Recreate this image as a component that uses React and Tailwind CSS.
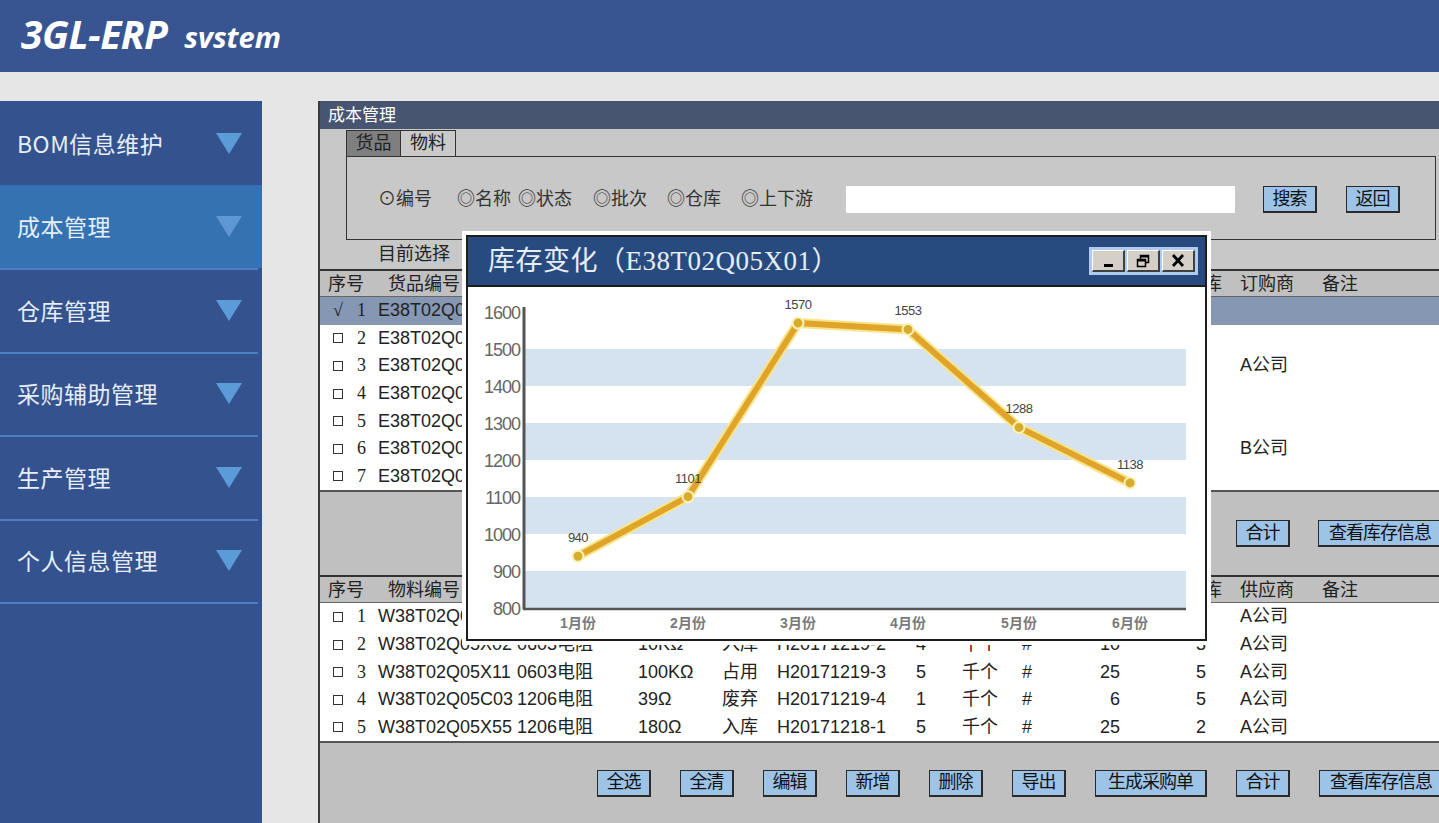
import React from 'react'

//#region data
const menu = [
    { label: 'BOM信息维护', active: false, line: false },
    { label: '成本管理', active: true, line: false },
    { label: '仓库管理', active: false, line: true },
    { label: '采购辅助管理', active: false, line: true },
    { label: '生产管理', active: false, line: true },
    { label: '个人信息管理', active: false, line: true },
]

// columns between 名称 and 位置 sit under the popup in the screenshot, so they stay empty
const goods = [
    { n: 1, code: 'E38T02Q05X01', buyer: '' },
    { n: 2, code: 'E38T02Q05X02', buyer: '' },
    { n: 3, code: 'E38T02Q05X03', buyer: 'A公司' },
    { n: 4, code: 'E38T02Q05X04', buyer: '' },
    { n: 5, code: 'E38T02Q05X05', buyer: '' },
    { n: 6, code: 'E38T02Q05X06', buyer: 'B公司' },
    { n: 7, code: 'E38T02Q05X07', buyer: '' },
]

const materials = [
    { n: 1, code: 'W38T02Q05X01', name: '', spec: '', status: '', batch: '', qty: '', unit: '', loc: '', q2: '', x: '', sup: 'A公司' },
    { n: 2, code: 'W38T02Q05X02', name: '0603电阻', spec: '10KΩ', status: '入库', batch: 'H20171219-2', qty: '4', unit: '千个', loc: '#', q2: '10', x: '3', sup: 'A公司' },
    { n: 3, code: 'W38T02Q05X11', name: '0603电阻', spec: '100KΩ', status: '占用', batch: 'H20171219-3', qty: '5', unit: '千个', loc: '#', q2: '25', x: '5', sup: 'A公司' },
    { n: 4, code: 'W38T02Q05C03', name: '1206电阻', spec: '39Ω', status: '废弃', batch: 'H20171219-4', qty: '1', unit: '千个', loc: '#', q2: '6', x: '5', sup: 'A公司' },
    { n: 5, code: 'W38T02Q05X55', name: '1206电阻', spec: '180Ω', status: '入库', batch: 'H20171218-1', qty: '5', unit: '千个', loc: '#', q2: '25', x: '2', sup: 'A公司' },
]

const chart = [
    { m: '1月份', v: 940 },
    { m: '2月份', v: 1101 },
    { m: '3月份', v: 1570 },
    { m: '4月份', v: 1553 },
    { m: '5月份', v: 1288 },
    { m: '6月份', v: 1138 },
]
//#endregion

const Btn = ({ children, w = 'w-[54px]' }) => (
    <div className={`${w} h-[27px] shrink-0 flex items-center justify-center bg-[#9dc3e6] border border-[#2a2a2a] border-r-2 border-b-2 text-[18px] tracking-[-1px] text-[#111] whitespace-nowrap overflow-hidden`}>
        {children}
    </div>
)

const Box = () => (
    <span className="inline-block w-[10px] h-[10px] border border-[#333] bg-white"></span>
)

const SelCell = ({ n, checked }) => (
    <div className="w-[58px] shrink-0 flex items-center">
        <div className="w-[37px] pl-[13px] flex items-center">
            {checked ? <span className="font-['Liberation_Serif',serif] text-[18px] text-[#222]">√</span> : <Box />}
        </div>
        <span className="font-['Liberation_Serif',serif] text-[18px] text-[#222]">{n}</span>
    </div>
)

const TableHeader = ({ codeLabel, partyLabel }) => (
    <div className="h-[28px] shrink-0 border-t-2 border-b border-t-[#333] border-b-[#666] bg-[#c0c0c0] flex items-center text-[18px] text-[#222] pt-[1px]">
        <div className="w-[68px] shrink-0 pl-[8px]">序号</div>
        <div className="w-[798px] shrink-0">{codeLabel}</div>
        <div className="w-[54px] shrink-0">在库</div>
        <div className="w-[82px] shrink-0">{partyLabel}</div>
        <div>备注</div>
    </div>
)

const DataRow = ({ r, checked, party }) => (
    <div className={`h-[27.6px] shrink-0 flex items-center text-[18px] text-[#222] whitespace-nowrap ${checked ? 'bg-[#8597b3]' : 'bg-white'}`}>
        <SelCell n={r.n} checked={checked} />
        <div className="w-[139px] shrink-0">{r.code}</div>
        <div className="w-[121px] shrink-0">{r.name}</div>
        <div className="w-[84px] shrink-0">{r.spec}</div>
        <div className="w-[55px] shrink-0">{r.status}</div>
        <div className="w-[139px] shrink-0">{r.batch}</div>
        <div className="w-[46px] shrink-0">{r.qty}</div>
        <div className="w-[60px] shrink-0">{r.unit}</div>
        <div className="w-[58px] shrink-0">{r.loc}</div>
        <div className="w-[40px] shrink-0 text-right">{r.q2}</div>
        <div className="w-[76px] shrink-0"></div>
        <div className="w-[44px] shrink-0">{r.x}</div>
        <div className="w-[82px] shrink-0">{party}</div>
        <div></div>
    </div>
)

const StockChart = () => {
    const y = (v) => 321 - (v - 800) * 0.37
    const xs = [110, 220, 330, 440, 551, 662]
    const pts = chart.map((d, i) => `${xs[i]},${y(d.v)}`).join(' ')
    const ticks = [1600, 1500, 1400, 1300, 1200, 1100, 1000, 900, 800]
    const bands = [1500, 1300, 1100, 900]
    return (
        <svg width="738" height="352" viewBox="0 0 738 352">
            {bands.map((b) => (
                <rect key={b} x="56" y={y(b)} width="662" height="37" fill="#d5e3f0" />
            ))}
            <line x1="56" y1="20" x2="56" y2="322" stroke="#555" strokeWidth="3" />
            <line x1="55" y1="322" x2="718" y2="322" stroke="#555" strokeWidth="2.5" />
            {ticks.map((t) => (
                <text key={t} x="52" y={y(t) + 7} textAnchor="end" fontSize="18" fill="#666" fontFamily="Liberation Sans, sans-serif" letterSpacing="-1">
                    {t}
                </text>
            ))}
            <polyline points={pts} fill="none" stroke="#f6e68a" strokeWidth="10" strokeLinejoin="round" />
            <polyline points={pts} fill="none" stroke="#e0a42a" strokeWidth="6" strokeLinejoin="round" />
            {chart.map((d, i) => (
                <g key={d.m}>
                    <circle cx={xs[i]} cy={y(d.v)} r="5.5" fill="#d6ab2e" stroke="#fbf2b8" strokeWidth="2" />
                    <text x={xs[i]} y={y(d.v) - 14} textAnchor="middle" fontSize="13" fill="#444" fontFamily="Liberation Sans, sans-serif" letterSpacing="-0.5">
                        {d.v}
                    </text>
                    <text x={xs[i]} y="341" textAnchor="middle" fontSize="14" fontWeight="bold" fill="#7a7a7a" fontFamily="Liberation Sans, Noto Sans CJK SC, sans-serif">
                        {d.m}
                    </text>
                </g>
            ))}
        </svg>
    )
}

const WinButtons = () => (
    <div className="flex gap-[2px] bg-[#aecbef] p-[3px] h-[28px]">
        <div className="w-[33px] h-full bg-[#d4d0c8] border-t border-l border-t-white border-l-white border-r-2 border-b-2 border-r-[#404040] border-b-[#404040] flex items-end justify-center pb-[3px]">
            <div className="w-[9px] h-[3px] bg-black"></div>
        </div>
        <div className="w-[33px] h-full bg-[#d4d0c8] border-t border-l border-t-white border-l-white border-r-2 border-b-2 border-r-[#404040] border-b-[#404040] flex items-center justify-center">
            <svg width="14" height="14" viewBox="0 0 14 14">
                <rect x="4.5" y="1.5" width="8" height="7" fill="#d4d0c8" stroke="#000" strokeWidth="1.5" />
                <rect x="4" y="1" width="9" height="2.5" fill="#000" />
                <rect x="1.5" y="5.5" width="8" height="7" fill="#d4d0c8" stroke="#000" strokeWidth="1.5" />
                <rect x="1" y="5" width="9" height="2.5" fill="#000" />
            </svg>
        </div>
        <div className="w-[33px] h-full bg-[#d4d0c8] border-t border-l border-t-white border-l-white border-r-2 border-b-2 border-r-[#404040] border-b-[#404040] flex items-center justify-center">
            <svg width="14" height="15" viewBox="0 0 14 15">
                <path d="M2 2 L12 13 M12 2 L2 13" stroke="#000" strokeWidth="2.8" />
            </svg>
        </div>
    </div>
)

const App = () => {
    return (
        <div className="w-[1439px] h-[823px] overflow-hidden relative bg-[#e6e6e6] flex flex-col font-['Liberation_Sans','Noto_Sans_CJK_SC',sans-serif]">
            {/* header */}
            <div className="h-[72px] shrink-0 bg-[#385592] flex items-center pl-[21px] pb-[3px] text-white italic font-bold font-['Open_Sans',sans-serif]">
                <span className="text-[39px] tracking-[-0.5px]">3GL-ERP</span>
                <span className="text-[29px] ml-[17px] mt-[4px]">svstem</span>
            </div>

            <div className="flex-1 flex pt-[29px] min-h-0">
                {/* sidebar */}
                <div className="w-[262px] shrink-0 bg-[#34528e] flex flex-col font-['Noto_Sans_CJK_SC',sans-serif]">
                    {menu.map((m) => (
                        <div key={m.label} className={`h-[83.5px] shrink-0 flex items-center pl-[17px] pr-[20px] relative ${m.active ? 'bg-[#3572b1]' : ''}`}>
                            <span className="flex-1 text-[23px] text-[#e8eef8] tracking-[0.5px]">{m.label}</span>
                            <svg width="26" height="22" viewBox="0 0 26 22">
                                <path d="M0 1 L26 1 L13 22 Z" fill={m.active ? '#5e97d4' : '#5b9bd8'} />
                            </svg>
                            {m.line && <div className="absolute left-0 top-0 w-[258px] h-[2px] bg-[#4f80c4]"></div>}
                        </div>
                    ))}
                    <div className="w-[258px] h-[2px] bg-[#4f80c4]"></div>
                </div>

                {/* main panel */}
                <div className="ml-[56px] flex-1 flex flex-col border-l-2 border-[#3c3c3c] bg-[#c8c8c8]">
                    <div className="h-[28px] shrink-0 bg-[#475571] text-white text-[17px] flex items-center pl-[8px] pt-[2px]">成本管理</div>

                    <div className="pt-[1px] pl-[26px] pr-[8px]">
                        <div className="flex h-[26px] text-[18px] text-[#222]">
                            <div className="w-[55px] bg-[#7f7f7f] border border-[#333] border-b-0 flex items-center justify-center">货品</div>
                            <div className="w-[55px] bg-[#cacaca] border border-l-0 border-[#333] border-b-0 flex items-center justify-center">物料</div>
                        </div>
                        <div className="h-[84px] border border-[#333] flex items-center pl-[31px] pt-[3px] text-[18px] text-[#333]">
                            <div className="flex items-center whitespace-nowrap">
                                <span className="w-[79px]">⊙编号</span>
                                <span className="w-[61px]">◎名称</span>
                                <span className="w-[75px]">◎状态</span>
                                <span className="w-[74px]">◎批次</span>
                                <span className="w-[74px]">◎仓库</span>
                                <span className="w-[105px]">◎上下游</span>
                            </div>
                            <div className="w-[389px] h-[27px] bg-white"></div>
                            <div className="ml-[28px]"><Btn>搜索</Btn></div>
                            <div className="ml-[29px]"><Btn>返回</Btn></div>
                        </div>
                    </div>
                    <div className="h-[29px] shrink-0 flex items-center pl-[58px] text-[18px] text-[#222]">目前选择</div>

                    <TableHeader codeLabel="货品编号" partyLabel="订购商" />
                    <div className="flex flex-col">
                        {goods.map((r, i) => (
                            <DataRow key={r.n} r={r} checked={i === 0} party={r.buyer} />
                        ))}
                    </div>
                    <div className="h-[2px] shrink-0 bg-[#555]"></div>
                    <div className="h-[83px] shrink-0 bg-[#c0c0c0] flex items-center pl-[916px] gap-[28px]">
                        <Btn>合计</Btn>
                        <Btn w="w-[125px]">查看库存信息</Btn>
                    </div>

                    <TableHeader codeLabel="物料编号" partyLabel="供应商" />
                    <div className="flex flex-col">
                        {materials.map((r) => (
                            <DataRow key={r.n} r={r} checked={false} party={r.sup} />
                        ))}
                    </div>
                    <div className="h-[2px] shrink-0 bg-[#555]"></div>
                    <div className="flex-1 bg-[#c0c0c0] flex items-center pl-[277px] gap-[29px]">
                        <Btn>全选</Btn>
                        <Btn>全清</Btn>
                        <Btn>编辑</Btn>
                        <Btn>新增</Btn>
                        <Btn>删除</Btn>
                        <Btn>导出</Btn>
                        <Btn w="w-[112px]">生成采购单</Btn>
                        <Btn>合计</Btn>
                        <Btn w="w-[125px]">查看库存信息</Btn>
                    </div>
                </div>
            </div>

            {/* stock popup */}
            <div className="absolute left-[462px] top-[231px] w-[749px] h-[414px] bg-white p-[4px]">
                <div className="w-full h-full border-2 border-[#1e1e1e] flex flex-col">
                    <div className="h-[50px] shrink-0 bg-[#284b7f] border-b-2 border-[#1e1e1e] flex items-center pl-[20px] pr-[7px]">
                        <span className="flex-1 text-[27px] text-[#e9edf5] font-['Liberation_Serif','Noto_Sans_CJK_SC',serif] tracking-[0.5px]">库存变化（E38T02Q05X01）</span>
                        <WinButtons />
                    </div>
                    <div className="flex-1 bg-white">
                        <StockChart />
                    </div>
                </div>
            </div>
        </div>
    )
}

export default App
